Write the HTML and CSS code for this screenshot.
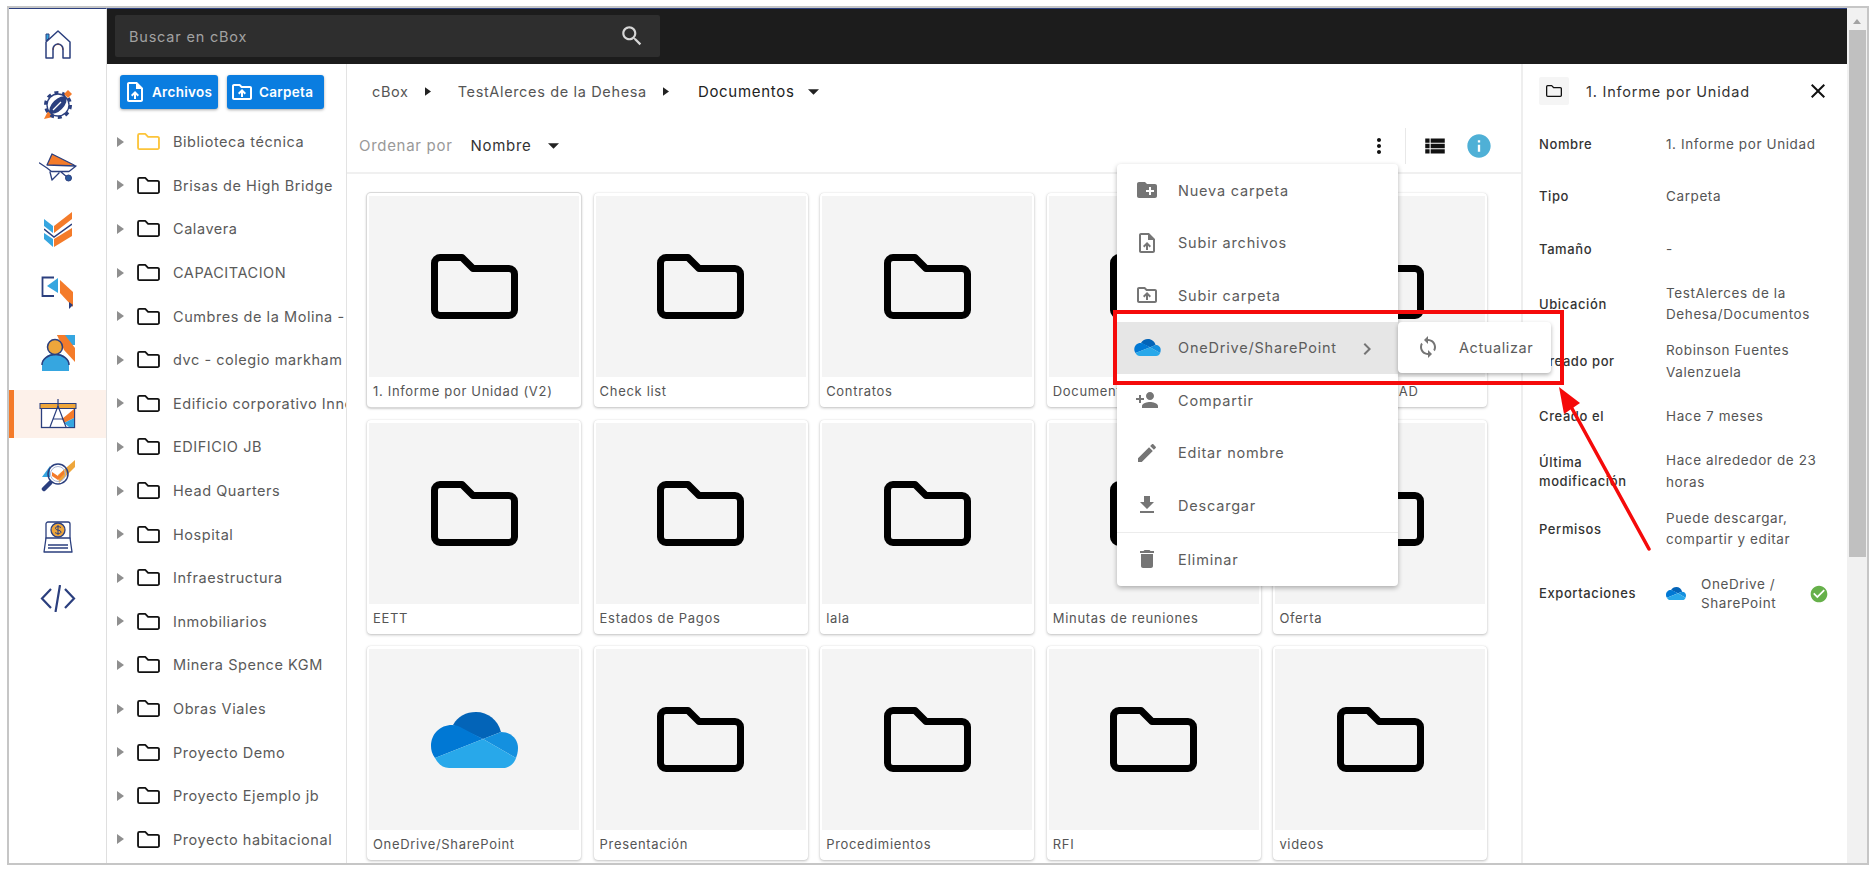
FILE: index.html
```html
<!DOCTYPE html>
<html lang="es">
<head>
<meta charset="utf-8">
<title>cBox</title>
<link rel="stylesheet" href="styles.css">
</head>
<body>
<svg class="defs" aria-hidden="true">
  <symbol id="folder" viewBox="0 0 87 65"><path fill="none" stroke="currentColor" stroke-width="7" stroke-linejoin="round" d="M9 3.5H31L42 14.5H78A5.5 5.5 0 0 1 83.5 20V56A5.5 5.5 0 0 1 78 61.5H9A5.5 5.5 0 0 1 3.5 56V9A5.5 5.5 0 0 1 9 3.5Z"/></symbol>
  <symbol id="onedrive" viewBox="0 0 87 56">
    <path fill="#0364b8" d="M22 13C27 4 35 0 45 0C57 0 67 8 70 20L52 27Z"/>
    <path fill="#0078d4" d="M4 46C1 42 0 38 0 34C0 22 9 13 21 13C25 13 28 14 31 16L52 27Z"/>
    <path fill="#1490df" d="M52 27L70 20C80 20 87 27 87 36C87 40 86 43 85 46Z"/>
    <path fill="#28a8ea" d="M4 46L52 27L85 46C83 52 78 56 72 56H18C12 56 7 52 4 46Z"/>
  </symbol>
  <symbol id="tri" viewBox="0 0 7 10"><path fill="currentColor" d="M0 0L7 5L0 10Z"/></symbol>
  <symbol id="caret" viewBox="0 0 10 5"><path fill="currentColor" d="M0 0H10L5 5Z"/></symbol>
  <symbol id="i-new" viewBox="0 0 24 24"><path fill="currentColor" d="M20 6h-8l-2-2H4c-1.11 0-1.99.89-1.99 2L2 18c0 1.11.89 2 2 2h16c1.11 0 2-.89 2-2V8c0-1.11-.89-2-2-2zm-1 8h-3v3h-2v-3h-3v-2h3V9h2v3h3v2z"/></symbol>
  <symbol id="i-file" viewBox="0 0 24 24"><path fill="currentColor" d="M14 2H6c-1.1 0-1.99.9-1.99 2L4 20c0 1.1.89 2 1.99 2H18c1.1 0 2-.9 2-2V8l-6-6zm4 18H6V4h7v5h5v11zM8 15.01l1.41 1.41L11 14.84V19h2v-4.16l1.59 1.59L16 15.01 12.01 11 8 15.01z"/></symbol>
  <symbol id="i-dir" viewBox="0 0 24 24"><path fill="currentColor" d="M20 6h-8l-2-2H4c-1.1 0-1.99.9-1.99 2L2 18c0 1.1.9 2 2 2h16c1.1 0 2-.9 2-2V8c0-1.1-.9-2-2-2zm0 12H4V6h5.17l2 2H20v10zM9.41 14.42 11 12.84V17h2v-4.16l1.59 1.59L16 13.01 12.01 9 8 13.01l1.41 1.41z"/></symbol>
</svg>

<div class="frame">
  <nav class="rail">
    <a class="rail-item"><svg class="ri" width="40" height="40" viewBox="0 0 40 40"><path fill="#f47b2a" d="M14.500 23L20 18L25.500 23V25H14.500Z"/><path fill="#fff" d="M16 27V24a4 4 0 0 1 8 0V27Z"/><path fill="none" stroke="#2b3f7e" stroke-width="1.500" stroke-linejoin="round" d="M8 33V17L20 6L32 17V33H25V24a5 5 0 0 0-10 0V33Z"/><path fill="#36a6e0" stroke="#2b3f7e" d="M8 16V9H11V13Z"/></svg></a>
    <a class="rail-item up2"><svg class="ri" width="40" height="40" viewBox="0 0 40 40"><path fill="#f47b2a" d="M10 26L6 34L15 32Z"/><circle cx="20" cy="20" r="12.500" fill="none" stroke="#2b3f7e" stroke-width="3" stroke-dasharray="4 3.850"/><circle cx="20" cy="20" r="11" fill="#fff" stroke="#2b3f7e" stroke-width="1.300"/><ellipse cx="20" cy="20" rx="11" ry="5.500" transform="rotate(-45 20 20)" fill="#2b3f7e"/><path stroke="#fff" stroke-width="1.200" d="M15 25L23 17"/><path fill="#f47b2a" d="M26 9L30 5L34 9L30 13Z"/></svg></a>
    <a class="rail-item"><svg class="ri" width="38" height="30" viewBox="0 0 38 30"><path fill="#f47b2a" d="M13 1L35 12L8 12Z"/><path fill="none" stroke="#2b3f7e" stroke-width="1.300" stroke-linejoin="round" stroke-linecap="round" d="M13 1L35 12M13 1L8 12L37 13L30 18.500H12.500L8 15L0.500 10M11 19L13 27L20 20M22 19L28 24"/><circle cx="29.500" cy="25" r="3" fill="#2b5a9e" stroke="#2b3f7e"/></svg></a>
    <a class="rail-item"><svg class="ri" width="28" height="36" viewBox="0 0 28 36"><path fill="#f47b2a" d="M28 0V7L10 21V14Z"/><path fill="#36a6e0" d="M0 7L9 14V21L0 14Z"/><path fill="#36a6e0" d="M0 21L9 27V35L0 27Z"/><path fill="#f47b2a" d="M10 27L28 16V24L10 35Z"/><path fill="none" stroke="#2b3f7e" stroke-width="1.500" d="M0 17L10 25L28 12"/></svg></a>
    <a class="rail-item down2"><svg class="ri" width="34" height="34" viewBox="0 0 34 34"><path fill="none" stroke="#2b3f7e" stroke-width="1.800" d="M13 1.500H1.500V20H13"/><path fill="#36a6e0" d="M6 10L17 2V17Z"/><path fill="#f47b2a" d="M19 4L32 16V31L19 17Z"/><path fill="#2b3f7e" d="M28 26L32 29L28 33Z"/></svg></a>
    <a class="rail-item"><svg class="ri" width="34" height="36" viewBox="0 0 34 36"><path fill="#36a6e0" d="M16 0H34V10H26Z"/><path fill="#f47b2a" d="M16 0H24L34 13V27L23 15Z"/><path fill="#36a6e0" d="M1 36V29a13 10 0 0 1 27 0V36Z"/><path fill="none" stroke="#2b3f7e" stroke-width="1.500" d="M1 30a13 10 0 0 1 27 0"/><circle cx="14" cy="12" r="7.500" fill="#eea63b" stroke="#2b3f7e" stroke-width="1.500"/></svg></a>
    <a class="rail-item active"><svg class="ri" width="38" height="30" viewBox="0 0 38 30"><rect x="2.500" y="9" width="33" height="19.500" fill="#fff" stroke="#2b3f7e" stroke-width="1.300"/><path fill="#f47b2a" d="M23 20L35 10V19L25 24Z"/><path fill="#36a6e0" d="M25 24L35 19V28H30Z"/><rect x="1" y="4.500" width="36" height="5" fill="#eea63b" stroke="#2b3f7e"/><path fill="none" stroke="#2b3f7e" stroke-width="1.200" d="M19 0V7M19 7L11 28M19 7L27 28M14 20H24"/></svg></a>
    <a class="rail-item"><svg class="ri" width="34" height="32" viewBox="0 0 34 32"><path fill="#36a6e0" d="M1 17L9 6V17Z"/><path fill="#eea63b" d="M17 15L34 0V7L18 23Z"/><circle cx="17" cy="14" r="10" fill="none" stroke="#2b3f7e" stroke-width="1.500"/><circle cx="17" cy="14" r="7.500" fill="none" stroke="#a9b3d0"/><path fill="#f47b2a" d="M11 12L17 16L23 10L23 14L17 20L11 16Z"/><path stroke="#2b3f7e" stroke-width="4.500" stroke-linecap="round" d="M9 23L3 29"/></svg></a>
    <a class="rail-item"><svg class="ri" width="30" height="32" viewBox="0 0 30 32"><rect x="3" y="1" width="24" height="18" rx="2" fill="#fff" stroke="#2b3f7e" stroke-width="1.300"/><path fill="#fff" stroke="#2b3f7e" stroke-width="1.300" stroke-linejoin="round" d="M3 17H27L29 31H1Z"/><circle cx="15" cy="9" r="7" fill="#eea63b" stroke="#2b3f7e" stroke-width="1.300"/><path fill="none" stroke="#2b3f7e" d="M18 6.500C16 5 12 5.500 12.500 7.500C13 10 18 8.500 18 11C18 13 14 13 12 11.500M15 4V14"/><path stroke="#2b3f7e" stroke-width="1.300" d="M5 24H25M5 27H25"/></svg></a>
    <a class="rail-item"><svg class="ri" width="36" height="27" viewBox="0 0 36 27"><path fill="none" stroke="#2b3f7e" stroke-width="2.200" d="M11 4L2 13.500L11 23M25 4L34 13.500L25 23M20 0L15.500 27"/></svg></a>
  </nav>

  <div class="workspace">
    <header class="topbar">
      <div class="search">
        <span class="search-text">Buscar en cBox</span>
        <svg class="search-icon" viewBox="0 0 24 24"><path fill="currentColor" d="M15.500 14h-.79l-.28-.27C15.410 12.590 16 11.110 16 9.500 16 5.910 13.090 3 9.500 3S3 5.910 3 9.500 5.910 16 9.500 16c1.610 0 3.090-.59 4.230-1.570l.27.28v.79l5 4.990L20.490 19l-4.990-5zm-6 0C7.010 14 5 11.990 5 9.500S7.010 5 9.500 5 14 7.010 14 9.500 11.990 14 9.500 14z"/></svg>
      </div>
    </header>

    <div class="columns">
      <aside class="tree">
        <div class="tree-actions">
          <button class="btn btn-a"><svg class="btn-icon"><use href="#i-file"/></svg>Archivos</button>
          <button class="btn btn-c"><svg class="btn-icon"><use href="#i-dir"/></svg>Carpeta</button>
        </div>
        <ul class="tree-list">
          <li class="tree-row"><svg class="tree-tri"><use href="#tri"/></svg><svg class="tree-folder yellow"><use href="#folder"/></svg><span>Biblioteca técnica</span></li>
          <li class="tree-row"><svg class="tree-tri"><use href="#tri"/></svg><svg class="tree-folder"><use href="#folder"/></svg><span>Brisas de High Bridge</span></li>
          <li class="tree-row"><svg class="tree-tri"><use href="#tri"/></svg><svg class="tree-folder"><use href="#folder"/></svg><span>Calavera</span></li>
          <li class="tree-row"><svg class="tree-tri"><use href="#tri"/></svg><svg class="tree-folder"><use href="#folder"/></svg><span>CAPACITACION</span></li>
          <li class="tree-row"><svg class="tree-tri"><use href="#tri"/></svg><svg class="tree-folder"><use href="#folder"/></svg><span>Cumbres de la Molina - Etapa</span></li>
          <li class="tree-row"><svg class="tree-tri"><use href="#tri"/></svg><svg class="tree-folder"><use href="#folder"/></svg><span>dvc - colegio markham</span></li>
          <li class="tree-row"><svg class="tree-tri"><use href="#tri"/></svg><svg class="tree-folder"><use href="#folder"/></svg><span>Edificio corporativo Innova</span></li>
          <li class="tree-row"><svg class="tree-tri"><use href="#tri"/></svg><svg class="tree-folder"><use href="#folder"/></svg><span>EDIFICIO JB</span></li>
          <li class="tree-row"><svg class="tree-tri"><use href="#tri"/></svg><svg class="tree-folder"><use href="#folder"/></svg><span>Head Quarters</span></li>
          <li class="tree-row"><svg class="tree-tri"><use href="#tri"/></svg><svg class="tree-folder"><use href="#folder"/></svg><span>Hospital</span></li>
          <li class="tree-row"><svg class="tree-tri"><use href="#tri"/></svg><svg class="tree-folder"><use href="#folder"/></svg><span>Infraestructura</span></li>
          <li class="tree-row"><svg class="tree-tri"><use href="#tri"/></svg><svg class="tree-folder"><use href="#folder"/></svg><span>Inmobiliarios</span></li>
          <li class="tree-row"><svg class="tree-tri"><use href="#tri"/></svg><svg class="tree-folder"><use href="#folder"/></svg><span>Minera Spence KGM</span></li>
          <li class="tree-row"><svg class="tree-tri"><use href="#tri"/></svg><svg class="tree-folder"><use href="#folder"/></svg><span>Obras Viales</span></li>
          <li class="tree-row"><svg class="tree-tri"><use href="#tri"/></svg><svg class="tree-folder"><use href="#folder"/></svg><span>Proyecto Demo</span></li>
          <li class="tree-row"><svg class="tree-tri"><use href="#tri"/></svg><svg class="tree-folder"><use href="#folder"/></svg><span>Proyecto Ejemplo jb</span></li>
          <li class="tree-row"><svg class="tree-tri"><use href="#tri"/></svg><svg class="tree-folder"><use href="#folder"/></svg><span>Proyecto habitacional</span></li>
        </ul>
      </aside>

      <main class="main">
        <div class="crumbs">
          <span class="crumb c1">cBox</span><svg class="crumb-tri"><use href="#tri"/></svg>
          <span class="crumb c2">TestAlerces de la Dehesa</span><svg class="crumb-tri"><use href="#tri"/></svg>
          <span class="crumb c3">Documentos</span><svg class="caret"><use href="#caret"/></svg>
        </div>
        <div class="toolbar">
          <span class="sort-label">Ordenar por</span>
          <span class="sort-value">Nombre</span>
          <svg class="caret"><use href="#caret"/></svg>
          <span class="spacer"></span>
          <svg class="tb-more" viewBox="0 0 24 24"><path fill="currentColor" d="M12 8c1.100 0 2-.9 2-2s-.9-2-2-2-2 .9-2 2 .9 2 2 2zm0 2c-1.100 0-2 .9-2 2s.9 2 2 2 2-.9 2-2-.9-2-2-2zm0 6c-1.100 0-2 .9-2 2s.9 2 2 2 2-.9 2-2-.9-2-2-2z"/></svg>
          <span class="tb-div"></span>
          <svg class="tb-list" viewBox="0 0 24 24"><path fill="currentColor" d="M3 14h4v-4H3v4zm0 5h4v-4H3v4zM3 9h4V5H3v4zm5 5h13v-4H8v4zm0 5h13v-4H8v4zM8 5v4h13V5H8z"/></svg>
          <svg class="tb-info" viewBox="0 0 24 24"><path fill="currentColor" d="M12 2C6.480 2 2 6.480 2 12s4.480 10 10 10 10-4.480 10-10S17.520 2 12 2zm1 15h-2v-6h2v6zm0-8h-2V7h2v2z"/></svg>
        </div>
        <div class="grid">
          <article class="card selected"><div class="thumb"><svg class="big-folder"><use href="#folder"/></svg></div><div class="label">1. Informe por Unidad (V2)</div></article>
          <article class="card"><div class="thumb"><svg class="big-folder"><use href="#folder"/></svg></div><div class="label">Check list</div></article>
          <article class="card"><div class="thumb"><svg class="big-folder"><use href="#folder"/></svg></div><div class="label">Contratos</div></article>
          <article class="card"><div class="thumb"><svg class="big-folder"><use href="#folder"/></svg></div><div class="label">Documentos</div></article>
          <article class="card"><div class="thumb"><svg class="big-folder"><use href="#folder"/></svg></div><div class="label">Planos en AUTOCAD</div></article>
          <article class="card"><div class="thumb"><svg class="big-folder"><use href="#folder"/></svg></div><div class="label">EETT</div></article>
          <article class="card"><div class="thumb"><svg class="big-folder"><use href="#folder"/></svg></div><div class="label">Estados de Pagos</div></article>
          <article class="card"><div class="thumb"><svg class="big-folder"><use href="#folder"/></svg></div><div class="label">lala</div></article>
          <article class="card"><div class="thumb"><svg class="big-folder"><use href="#folder"/></svg></div><div class="label">Minutas de reuniones</div></article>
          <article class="card"><div class="thumb"><svg class="big-folder"><use href="#folder"/></svg></div><div class="label">Oferta</div></article>
          <article class="card"><div class="thumb"><svg class="big-cloud"><use href="#onedrive"/></svg></div><div class="label">OneDrive/SharePoint</div></article>
          <article class="card"><div class="thumb"><svg class="big-folder"><use href="#folder"/></svg></div><div class="label">Presentación</div></article>
          <article class="card"><div class="thumb"><svg class="big-folder"><use href="#folder"/></svg></div><div class="label">Procedimientos</div></article>
          <article class="card"><div class="thumb"><svg class="big-folder"><use href="#folder"/></svg></div><div class="label">RFI</div></article>
          <article class="card"><div class="thumb"><svg class="big-folder"><use href="#folder"/></svg></div><div class="label">videos</div></article>
        </div>
      </main>

      <aside class="details">
        <div class="det-head">
          <span class="det-tile"><svg class="det-folder"><use href="#folder"/></svg></span>
          <span class="det-title">1. Informe por Unidad</span>
          <svg class="det-close" viewBox="0 0 24 24"><path fill="currentColor" d="M19 6.410 17.590 5 12 10.590 6.410 5 5 6.410 10.590 12 5 17.590 6.410 19 12 13.410 17.590 19 19 17.590 13.410 12z"/></svg>
        </div>
        <div class="det-row"><span class="det-key">Nombre</span><span class="det-val">1. Informe por Unidad</span></div>
        <div class="det-row"><span class="det-key">Tipo</span><span class="det-val">Carpeta</span></div>
        <div class="det-row"><span class="det-key">Tamaño</span><span class="det-val">-</span></div>
        <div class="det-row tall"><span class="det-key">Ubicación</span><span class="det-val">TestAlerces de la Dehesa/Documentos</span></div>
        <div class="det-row tall"><span class="det-key">Creado por</span><span class="det-val">Robinson Fuentes Valenzuela</span></div>
        <div class="det-row"><span class="det-key">Creado el</span><span class="det-val">Hace 7 meses</span></div>
        <div class="det-row tall"><span class="det-key">Última modificación</span><span class="det-val">Hace alrededor de 23 horas</span></div>
        <div class="det-row tall"><span class="det-key">Permisos</span><span class="det-val">Puede descargar, compartir y editar</span></div>
        <div class="det-row export"><span class="det-key">Exportaciones</span>
          <span class="det-export"><svg class="det-cloud"><use href="#onedrive"/></svg><span class="det-export-name">OneDrive / SharePoint</span><svg class="det-ok" viewBox="0 0 24 24"><path fill="currentColor" d="M12 2C6.480 2 2 6.480 2 12s4.480 10 10 10 10-4.480 10-10S17.520 2 12 2zm-2 15l-5-5 1.410-1.410L10 14.170l7.590-7.590L19 8l-9 9z"/></svg></span>
        </div>
      </aside>
    </div>
  </div>

  <div class="scrollbar">
    <span class="sb-up"></span>
    <span class="sb-thumb"></span>
  </div>
</div>

<div class="menu">
  <div class="menu-item"><svg class="mi"><use href="#i-new"/></svg>Nueva carpeta</div>
  <div class="menu-item"><svg class="mi"><use href="#i-file"/></svg>Subir archivos</div>
  <div class="menu-item"><svg class="mi"><use href="#i-dir"/></svg>Subir carpeta</div>
  <div class="menu-item hot"><svg class="mi-cloud"><use href="#onedrive"/></svg>OneDrive/SharePoint<svg class="mi-chev" viewBox="0 0 24 24"><path fill="currentColor" d="M10 6 8.590 7.410 13.170 12l-4.580 4.590L10 18l6-6z"/></svg>
    <div class="submenu"><svg class="mi" viewBox="0 0 24 24"><path fill="currentColor" d="M12 4V1L8 5l4 4V6c3.310 0 6 2.690 6 6 0 1.010-.25 1.970-.7 2.800l1.460 1.460C19.540 15.030 20 13.570 20 12c0-4.420-3.580-8-8-8zm0 14c-3.310 0-6-2.690-6-6 0-1.010.25-1.970.7-2.800L5.240 7.740C4.460 8.970 4 10.430 4 12c0 4.420 3.580 8 8 8v3l4-4-4-4v3z"/></svg>Actualizar</div>
  </div>
  <div class="menu-item"><svg class="mi" viewBox="0 0 24 24"><path fill="currentColor" d="M15 12c2.210 0 4-1.790 4-4s-1.790-4-4-4-4 1.790-4 4 1.790 4 4 4zm-9-2V7H4v3H1v2h3v3h2v-3h3v-2H6zm9 4c-2.670 0-8 1.340-8 4v2h16v-2c0-2.660-5.330-4-8-4z"/></svg>Compartir</div>
  <div class="menu-item"><svg class="mi" viewBox="0 0 24 24"><path fill="currentColor" d="M3 17.250V21h3.750L17.810 9.940l-3.750-3.750L3 17.250zM20.710 7.040c.39-.39.39-1.020 0-1.410l-2.340-2.340c-.39-.39-1.020-.39-1.410 0l-1.830 1.830 3.750 3.750 1.830-1.830z"/></svg>Editar nombre</div>
  <div class="menu-item"><svg class="mi" viewBox="0 0 24 24"><path fill="currentColor" d="M19 9h-4V3H9v6H5l7 7 7-7zM5 18v2h14v-2H5z"/></svg>Descargar</div>
  <div class="menu-sep"></div>
  <div class="menu-item"><svg class="mi" viewBox="0 0 24 24"><path fill="currentColor" d="M6 19c0 1.100.9 2 2 2h8c1.100 0 2-.9 2-2V7H6v12zM19 4h-3.500l-1-1h-5l-1 1H5v2h14V4z"/></svg>Eliminar</div>
</div>

<div class="callout"></div>
<svg class="callout-arrow" viewBox="0 0 100 170"><path fill="none" stroke="#f50a0a" stroke-width="3.500" stroke-linecap="round" d="M93 164L13 18"/><path fill="#f50a0a" d="M3 2L24 18L8 29Z"/></svg>
</body>
</html>
```
FILE: styles.css
```css
* { box-sizing: border-box; }
html, body { margin: 0; padding: 0; height: 100%; overflow: hidden; background: #fff; }
body {
  position: relative;
  font-family: "Inter", "Open Sans", sans-serif;
  font-size: 14.5px;
  letter-spacing: .55px;
  color: #555;
}
.defs { position: absolute; width: 0; height: 0; }
svg { display: block; flex: none; }
ul { list-style: none; margin: 0; padding: 0; }

.frame {
  display: flex;
  width: 1862px;
  height: 859px;
  margin: 6px 0 0 7px;
  border: 2px solid #c6c6c6;
  background: #fff;
  overflow: hidden;
}

.rail {
  width: 98px;
  flex: none;
  display: flex;
  flex-direction: column;
  gap: 13.5px;
  padding-top: 12px;
  border-right: 1px solid #dfdfdf;
  border-top: 1px solid #2b3f7e;
}
.rail-item {
  height: 48px;
  flex: none;
  display: flex;
  align-items: center;
  justify-content: center;
  border-left: 5px solid transparent;
  padding-right: 5px;
}
.rail-item.up2 { padding-bottom: 4px; }
.rail-item.down2 { padding-top: 4px; }
.rail-item.active { background: #fdf1ea; border-left-color: #f47b2a; }

.workspace { width: 1740px; flex: none; display: flex; flex-direction: column; }
.topbar {
  height: 56px;
  flex: none;
  background: #1c1c1c;
  border-top: 1px solid #2b3f7e;
  padding: 6px 0 6px 8px;
}
.search {
  width: 545px;
  height: 42px;
  background: #2e2e2e;
  border-radius: 2px;
  display: flex;
  align-items: center;
  justify-content: space-between;
  padding: 0 15px 0 14px;
}
.search-text { color: #a2a2a2; font-size: 14.5px; letter-spacing: .8px; }
.search-icon { width: 26px; height: 26px; color: #d6d6d6; }

.columns { flex: 1; display: flex; min-height: 0; }

.tree {
  width: 240px;
  flex: none;
  border-right: 1px solid #e3e3e3;
  overflow: hidden;
}
.tree-actions { display: flex; gap: 9px; padding: 11px 0 0 13px; height: 56px; }
.btn {
  height: 34px;
  border: 0;
  border-radius: 3px;
  background: #0a7de0;
  color: #fff;
  font: 600 13.5px "Inter", sans-serif;
  letter-spacing: .3px;
  display: flex;
  align-items: center;
  gap: 5px;
  padding: 0 0 0 3px;
  box-shadow: 0 1px 3px rgba(0, 0, 0, .35);
}
.btn-a { width: 98px; }
.btn-c { width: 97px; }
.btn-icon { width: 24px; height: 24px; color: #fff; }
.tree-row {
  height: 43.6px;
  display: flex;
  align-items: center;
  padding-left: 10px;
  white-space: nowrap;
  color: #5a5a5a;
}
.tree-tri { width: 7px; height: 10px; color: #8f8f8f; margin-right: 13px; }
.tree-folder { width: 23px; height: 17px; color: #111; margin-right: 13px; }
.tree-folder.yellow { color: #fcc43a; }

.main { flex: 1; min-width: 0; display: flex; flex-direction: column; }
.crumbs {
  height: 55px;
  flex: none;
  display: flex;
  align-items: center;
  padding-left: 25px;
}
.crumb.c1, .crumb.c2 { letter-spacing: .65px; }
.crumb-tri { width: 6px; height: 11px; color: #222; margin: 0 27px 0 16px; }
.crumb.c3 { color: #222; font-size: 15px; letter-spacing: .7px; margin-left: 2px; }
.caret { width: 11px; height: 6px; color: #222; margin-left: 13px; }
.toolbar {
  height: 55px;
  flex: none;
  display: flex;
  align-items: center;
  padding: 0 28px 0 12px;
  border-bottom: 2px solid #f0f0f0;
  font-size: 15px;
  letter-spacing: .7px;
}
.sort-label { color: #999; margin-right: 18px; }
.sort-value { color: #333; margin-right: 17px; }
.toolbar .caret { margin-left: 0; }
.spacer { flex: 1; }
.tb-more { width: 24px; height: 24px; color: #111; margin-right: 14px; }
.tb-div { width: 1px; height: 36px; background: #e8e8e8; margin-right: 16px; }
.tb-list { width: 26px; height: 26px; color: #111; margin-right: 17px; }
.tb-info { width: 28px; height: 28px; color: #4fb0d6; }

.grid {
  flex: 1;
  display: grid;
  grid-template-columns: repeat(5, 214px);
  grid-auto-rows: 214px;
  column-gap: 12.6px;
  row-gap: 12.5px;
  padding: 19px 0 0 20px;
  overflow: hidden;
}
.card {
  border-radius: 4px;
  background: #fff;
  padding: 3px 2px 0;
  box-shadow: 0 1px 3px rgba(0, 0, 0, .25), 0 0 1px rgba(0, 0, 0, .12);
}
.card.selected {
  box-shadow: 0 0 0 1px #d9d9d9, 0 1px 3px rgba(0, 0, 0, .4);
}
.thumb {
  height: 181px;
  background: #f4f4f4;
  display: flex;
  align-items: center;
  justify-content: center;
}
.big-folder { width: 87px; height: 65px; color: #000; }
.big-cloud { width: 87px; height: 56px; }
.label {
  padding: 6px 0 0 4px;
  font-size: 13px;
  letter-spacing: .68px;
  color: #555;
  white-space: nowrap;
  overflow: hidden;
}

.details { width: 326px; flex: none; border-left: 2px solid #eee; padding: 0 0 0 16px; font-size: 13.5px; letter-spacing: .6px; }
.det-head { display: flex; align-items: center; height: 54px; }
.det-tile {
  width: 30px;
  height: 28px;
  border-radius: 2px;
  background: #f5f5f5;
  display: flex;
  align-items: center;
  justify-content: center;
  margin-right: 17px;
}
.det-folder { width: 16px; height: 12px; color: #111; }
.det-title { color: #333; font-size: 14.5px; letter-spacing: .8px; flex: 1; }
.det-close { width: 24px; height: 24px; color: #111; margin-right: 17px; }
.det-row {
  display: grid;
  grid-template-columns: 127px 1fr;
  align-items: center;
  min-height: 52.5px;
  padding-right: 10px;
}
.det-row.tall { min-height: 57.5px; }
.det-row.export { min-height: 71px; padding-right: 18px; }
.det-key { color: #333; font-size: 13px; line-height: 19px; font-weight: 500; }
.det-val { color: #555; line-height: 21.5px; }
.det-export { display: flex; align-items: center; }
.det-cloud { width: 20px; height: 13px; margin-right: 15px; }
.det-export-name { flex: 1; line-height: 19px; color: #555; }
.det-ok { width: 20px; height: 20px; color: #66b04a; }

.scrollbar { flex: 1; background: #f1f1f1; display: flex; flex-direction: column; align-items: center; }
.sb-up {
  margin-top: 11px;
  width: 0;
  height: 0;
  border: 4.5px solid transparent;
  border-top: 0;
  border-bottom: 5px solid #a3a3a3;
}
.sb-thumb { margin-top: 6px; width: 17px; height: 527px; background: #c0c0c0; }

.menu {
  position: absolute;
  left: 1117px;
  top: 164px;
  width: 281px;
  background: #fff;
  border-radius: 4px;
  box-shadow: 0 2px 5px rgba(0, 0, 0, .3);
  color: #5c5c5c;
  letter-spacing: .8px;
}
.menu-item {
  position: relative;
  height: 52.5px;
  display: flex;
  align-items: center;
  padding-left: 18px;
}
.menu-item.hot { background: #e6e6e6; }
.mi { width: 24px; height: 24px; color: #757575; margin-right: 19px; }
.mi-cloud { width: 27px; height: 17px; margin: 0 17.500px 0 -1.500px; }
.mi-chev { position: absolute; left: 238px; top: 15px; width: 24px; height: 24px; color: #757575; }
.menu-sep { height: 1.500px; background: #ececec; }
.submenu {
  position: absolute;
  left: 100%;
  top: 0;
  width: 153px;
  height: 51px;
  display: flex;
  align-items: center;
  padding-left: 18px;
  background: #fff;
  border-radius: 4px;
  box-shadow: 0 2px 4px rgba(0, 0, 0, .3);
  letter-spacing: .6px;
}
.submenu .mi { margin-right: 19px; }

.callout {
  position: absolute;
  left: 1113px;
  top: 310px;
  width: 451px;
  height: 75px;
  border: 4px solid #f50a0a;
}
.callout-arrow {
  position: absolute;
  left: 1556px;
  top: 385px;
  width: 100px;
  height: 170px;
}
```
